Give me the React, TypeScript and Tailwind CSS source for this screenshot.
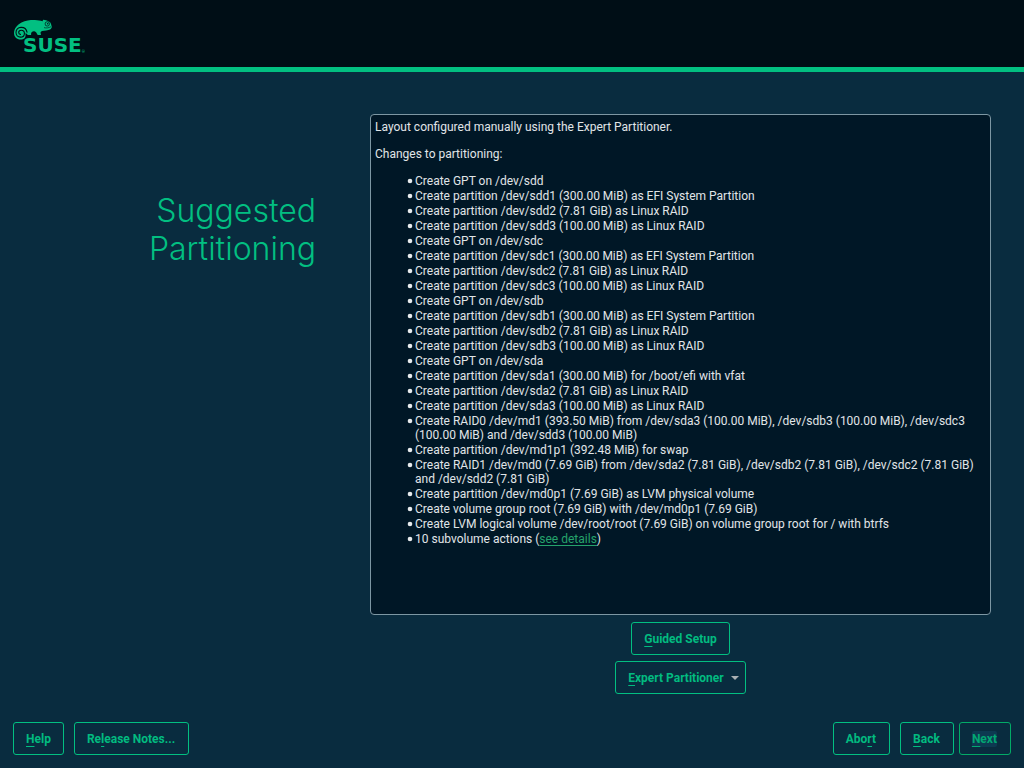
import React from 'react';

const actions = [
  'Create GPT on /dev/sdd',
  'Create partition /dev/sdd1 (300.00 MiB) as EFI System Partition',
  'Create partition /dev/sdd2 (7.81 GiB) as Linux RAID',
  'Create partition /dev/sdd3 (100.00 MiB) as Linux RAID',
  'Create GPT on /dev/sdc',
  'Create partition /dev/sdc1 (300.00 MiB) as EFI System Partition',
  'Create partition /dev/sdc2 (7.81 GiB) as Linux RAID',
  'Create partition /dev/sdc3 (100.00 MiB) as Linux RAID',
  'Create GPT on /dev/sdb',
  'Create partition /dev/sdb1 (300.00 MiB) as EFI System Partition',
  'Create partition /dev/sdb2 (7.81 GiB) as Linux RAID',
  'Create partition /dev/sdb3 (100.00 MiB) as Linux RAID',
  'Create GPT on /dev/sda',
  'Create partition /dev/sda1 (300.00 MiB) for /boot/efi with vfat',
  'Create partition /dev/sda2 (7.81 GiB) as Linux RAID',
  'Create partition /dev/sda3 (100.00 MiB) as Linux RAID',
  'Create RAID0 /dev/md1 (393.50 MiB) from /dev/sda3 (100.00 MiB), /dev/sdb3 (100.00 MiB), /dev/sdc3 (100.00 MiB) and /dev/sdd3 (100.00 MiB)',
  'Create partition /dev/md1p1 (392.48 MiB) for swap',
  'Create RAID1 /dev/md0 (7.69 GiB) from /dev/sda2 (7.81 GiB), /dev/sdb2 (7.81 GiB), /dev/sdc2 (7.81 GiB) and /dev/sdd2 (7.81 GiB)',
  'Create partition /dev/md0p1 (7.69 GiB) as LVM physical volume',
  'Create volume group root (7.69 GiB) with /dev/md0p1 (7.69 GiB)',
  'Create LVM logical volume /dev/root/root (7.69 GiB) on volume group root for / with btrfs',
];

type ActionButtonProps = {
  before?: string;
  hotkey: string;
  after: string;
  menu?: boolean;
  focused?: boolean;
  roomy?: boolean;
};

function ActionButton({ before = '', hotkey, after, menu, focused, roomy }: ActionButtonProps) {
  return (
    <button
      type="button"
      className={`flex h-[33px] items-center rounded-[3px] border pl-3 text-xs font-bold whitespace-nowrap ${
        menu ? 'pr-[6px]' : roomy ? 'pr-[13px]' : 'pr-3'
      } ${focused ? 'border-[#02ab67] text-[#02a873]' : 'border-[#02bf81] text-[#02bb80]'}`}
    >
      <span className={focused ? 'rounded-[2px] bg-[#0d3a51]' : ''}>
        {before}
        <span className="underline decoration-1 underline-offset-[3px] [text-decoration-skip-ink:none]">{hotkey}</span>
        {after}
      </span>
      {menu && (
        <svg viewBox="0 0 8 4" className="ml-[7px] h-1 w-2" fill="#a9b0b3" aria-hidden="true">
          <path d="M0 0h8L4 4z" />
        </svg>
      )}
    </button>
  );
}

function Bullet() {
  return (
    <svg viewBox="0 0 6 14" className="mr-[2px] h-[14px] w-[6px] shrink-0" fill="#e6eaec" aria-hidden="true">
      <circle cx="3" cy="7" r="2.300" />
    </svg>
  );
}

function Chameleon() {
  return (
    <svg viewBox="0 0 39 21" className="h-[21px] w-[39px]" fill="none" aria-hidden="true">
      <path
        fill="#02bf81"
        d="M0 14C.2 9.500 3 5.600 7.500 3.400 12 1.200 17 .9 21 1c3 .1 5.300.5 7.600 1.300L29 .8c2.500.3 5.300 1.200 7 2.400.7.500.8 1.200 1 1.900l.7 2.500c.2 1.100-.3 2-1.200 2.600-2.600 1.400-6 1.200-8.400 1.700-1.400.4-1.700 1.300-1.500 2.200l.4 1.800h-3.300c-1-1.500-1.700-3.400-3.400-3.600-2-.2-3.100.8-3.200 2.300v1.300h-3.400c-.7-.8-1.200-1.600-2.400-1.600C12.500 19 9.800 20.600 6.600 20.600 2.800 20.600 0 17.800 0 14z"
      />
      <path
        stroke="#000e16"
        strokeWidth="1.100"
        strokeLinecap="round"
        d="M13 13.200C12.400 10 9.800 8.300 7 8.400 4 8.500 2 10.800 2 13.600c0 2.600 2 4.500 4.400 4.500 2.300 0 4-1.600 4-3.700 0-1.900-1.400-3.200-3.200-3.200-1.500 0-2.500 1-2.500 2.300 0 1.200.8 1.900 1.800 1.900"
      />
      <circle cx="33.300" cy="4.900" r="2.200" stroke="#000e16" strokeWidth=".7" />
      <circle cx="33.700" cy="4.700" r=".7" fill="#000e16" />
      <path stroke="#000e16" strokeWidth=".6" d="M30 8.600c2.200.7 4.800.3 7-.9" />
    </svg>
  );
}

export default function App() {
  return (
    <div className="flex min-h-screen flex-col bg-[#092c3f] font-['Roboto',sans-serif] text-[#e0e5e8]">
      <header className="h-[72px] border-b-[5px] border-[#02bf81] bg-[#000e16] pt-[19px] pl-[14px]">
        <div className="relative w-[72px] text-[#02bf81]">
          <Chameleon />
          <div className="absolute top-[14px] left-[9px] flex items-end leading-6">
            <span className="font-['DejaVu_Sans',sans-serif] text-[20px] font-bold">SUSE</span>
            <span className="pb-[3px] text-[4px] leading-[4px]">®</span>
          </div>
        </div>
      </header>

      <main className="flex flex-1 pt-[42px] pr-[33px]">
        <h1 className="w-[370px] shrink-0 pt-[78px] pr-[54px] text-right font-['Inter',sans-serif] text-[32px] leading-[38px] font-light text-[#02bf81]">
          Suggested
          <br />
          Partitioning
        </h1>
        <div className="flex min-w-0 flex-1 flex-col items-center">
          <section className="w-full flex-1 rounded-[4px] border border-[#7d97a3] bg-[#001726] px-1 pt-[5px] pb-5 text-xs leading-[14px]">
            <p>Layout configured manually using the Expert Partitioner.</p>
            <p className="mt-[13px]">Changes to partitioning:</p>
            <ul className="mt-[13px] flex flex-col gap-px pl-8">
              {actions.map((action) => (
                <li key={action} className="flex">
                  <Bullet />
                  <span>{action}</span>
                </li>
              ))}
              <li className="flex">
                <Bullet />
                <span>
                  10 subvolume actions (
                  <a href="#details" className="text-[#25a26b] underline underline-offset-2">
                    see details
                  </a>
                  )
                </span>
              </li>
            </ul>
          </section>
          <div className="mt-[7px] flex flex-col items-center gap-[6px]">
            <ActionButton hotkey="G" after="uided Setup" />
            <ActionButton hotkey="E" after="xpert Partitioner" menu />
          </div>
        </div>
      </main>

      <footer className="flex justify-between px-[13px] pt-7 pb-[13px]">
        <div className="flex gap-[10px]">
          <ActionButton hotkey="H" after="elp" />
          <ActionButton before="Re" hotkey="l" after="ease Notes..." roomy />
        </div>
        <div className="flex gap-[5px]">
          <div className="flex gap-[10px]">
            <ActionButton before="Abo" hotkey="r" after="t" roomy />
            <ActionButton hotkey="B" after="ack" roomy />
          </div>
          <ActionButton hotkey="N" after="ext" focused roomy />
        </div>
      </footer>
    </div>
  );
}
